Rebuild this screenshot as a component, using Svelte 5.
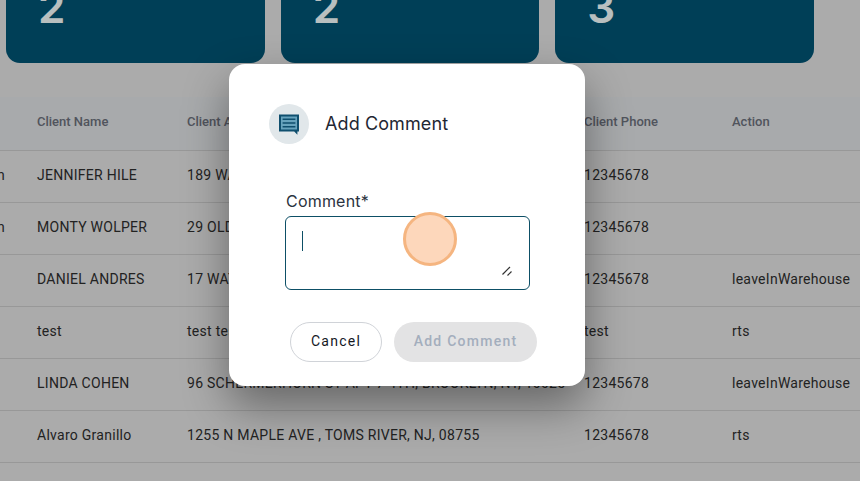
<script>
	const cards = [2, 2, 3]
	const rows = [
		{ tag: "n", name: "JENNIFER HILE", address: "189 WARREN ST, BROOKLYN, NY, 11201", phone: "12345678", action: "" },
		{ tag: "n", name: "MONTY WOLPER", address: "29 OLD MILL RD, GREAT NECK, NY, 11023", phone: "12345678", action: "" },
		{ tag: "", name: "DANIEL ANDRES", address: "17 WATER ST, NEW YORK, NY, 10004", phone: "12345678", action: "leaveInWarehouse" },
		{ tag: "", name: "test", address: "test test", phone: "test", action: "rts" },
		{ tag: "", name: "LINDA COHEN", address: "96 SCHERMERHORN ST APT 7 4TH, BROOKLYN, NY, 10025", phone: "12345678", action: "leaveInWarehouse" },
		{ tag: "", name: "Alvaro Granillo", address: "1255 N MAPLE AVE , TOMS RIVER, NJ, 08755", phone: "12345678", action: "rts" }
	]
</script>

<div class="page">
	<section class="cards">
		{#each cards as count}
			<div class="card">{count}</div>
		{/each}
	</section>

	<table>
		<thead>
			<tr>
				<th class="tag"></th>
				<th class="name">Client Name</th>
				<th class="address">Client Address</th>
				<th class="phone">Client Phone</th>
				<th>Action</th>
			</tr>
		</thead>
		<tbody>
			{#each rows as row}
				<tr>
					<td class="tag">{row.tag}</td>
					<td>{row.name}</td>
					<td>{row.address}</td>
					<td>{row.phone}</td>
					<td>{row.action}</td>
				</tr>
			{/each}
		</tbody>
	</table>

	<div class="backdrop"></div>

	<div class="modal">
		<header>
			<div class="icon">
				<svg width="24" height="24" viewBox="0 0 24 24">
					<path d="M2 2.5h20v17h-1.6v3.2l-3.2-3.2H2z" fill="#0f4f6e" />
					<rect x="4" y="4.5" width="16" height="13" fill="#67a3bd" />
					<path d="M5.6 7.2h12.8M5.6 11h12.8M5.6 14.8h12.8" stroke="#0f4f6e" stroke-width="1.5" />
				</svg>
			</div>
			<h2>Add Comment</h2>
		</header>

		<label for="comment">Comment*</label>
		<div class="field">
			<i class="caret"></i>
			<svg class="grip" width="12" height="12" viewBox="0 0 12 12">
				<path d="M1.5 9.5L9 2M6.5 10.5L10.5 6.5" stroke="#333" stroke-width="1.2" fill="none" />
			</svg>
			<textarea id="comment"></textarea>
		</div>

		<div class="actions">
			<button class="cancel">Cancel</button>
			<button class="submit" disabled>Add Comment</button>
		</div>
	</div>

	<div class="pointer"></div>
</div>

<style>
	.page {
		position: relative;
		width: 860px;
		height: 481px;
		overflow: hidden;
		background: #e4e4e4;
		font-family: Roboto, sans-serif;
	}

	.cards {
		display: grid;
		grid-template-columns: repeat(3, 1fr);
		gap: 16px;
		width: 808px;
		height: 100px;
		margin: -37px 0 0 6px;
	}

	.card {
		padding: 18px 0 0 32px;
		border-radius: 14px;
		background: #005475;
		color: #f6ffff;
		font: 600 44px/52px Inter, sans-serif;
	}

	table {
		width: 860px;
		margin-top: 34px;
		border-collapse: collapse;
		table-layout: fixed;
		font-size: 14px;
		letter-spacing: 0.27px;
	}

	thead tr {
		background: #e1e3e6;
		height: 53px;
	}

	th {
		padding: 0 0 4px;
		text-align: left;
		font-weight: 500;
		font-size: 13px;
		letter-spacing: 0;
		color: #6c717c;
		border-bottom: 1px solid #cbcbcb;
	}

	td {
		height: 49px;
		padding: 0 0 2px;
		color: #2e2e2e;
		border-bottom: 1px solid #cbcbcb;
		white-space: nowrap;
	}

	.tag {
		width: 37px;
	}

	td.tag {
		text-indent: -3px;
	}

	.name {
		width: 150px;
	}

	.address {
		width: 397px;
	}

	.phone {
		width: 148px;
	}

	.backdrop {
		position: absolute;
		inset: 0;
		background: rgba(0, 0, 0, 0.25);
	}

	.modal {
		position: absolute;
		left: 229px;
		top: 64px;
		width: 356px;
		height: 322px;
		box-sizing: border-box;
		padding: 40px 48px 0 40px;
		border-radius: 16px;
		background: #fff;
		box-shadow: 0 20px 45px rgba(0, 0, 0, 0.4);
		color: #1f2733;
	}

	header {
		display: flex;
		align-items: center;
		gap: 16px;
		margin-bottom: 47px;
	}

	.icon {
		display: flex;
		align-items: center;
		justify-content: center;
		width: 40px;
		height: 40px;
		border-radius: 50%;
		background: #e1e7ea;
	}

	h2 {
		margin: 0;
		font: 400 18px/24px Inter, sans-serif;
		letter-spacing: 0.1px;
	}

	label {
		display: block;
		margin: 0 0 5px 17px;
		font: 400 16px/20px Inter, sans-serif;
		letter-spacing: 0.2px;
		color: #2b3340;
	}

	.field {
		position: relative;
		width: 245px;
		height: 74px;
		margin-left: 16px;
	}

	textarea {
		display: block;
		width: 100%;
		height: 100%;
		box-sizing: border-box;
		border: 1px solid #0d4f66;
		border-radius: 6px;
		background: transparent;
		resize: none;
		outline: none;
	}

	.caret {
		position: absolute;
		left: 17px;
		top: 15px;
		width: 1px;
		height: 20px;
		background: #0d4f66;
	}

	.grip {
		position: absolute;
		right: 17px;
		bottom: 13px;
	}

	.actions {
		display: flex;
		gap: 12px;
		margin: 32px 0 0 21px;
	}

	button {
		height: 40px;
		padding: 0 0 2px;
		border-radius: 20px;
		font: 400 14px Roboto, sans-serif;
		letter-spacing: 1.25px;
	}

	.cancel {
		width: 92px;
		background: #fff;
		border: 1px solid #d0d3d8;
		color: #14181f;
	}

	.submit {
		width: 143px;
		background: #e3e3e4;
		border: none;
		color: #a3aebd;
		font-weight: 500;
	}

	.pointer {
		position: absolute;
		left: 403px;
		top: 212px;
		width: 54px;
		height: 54px;
		box-sizing: border-box;
		border-radius: 50%;
		background: #fdd7bb;
		border: 3px solid #f5b580;
	}
</style>
